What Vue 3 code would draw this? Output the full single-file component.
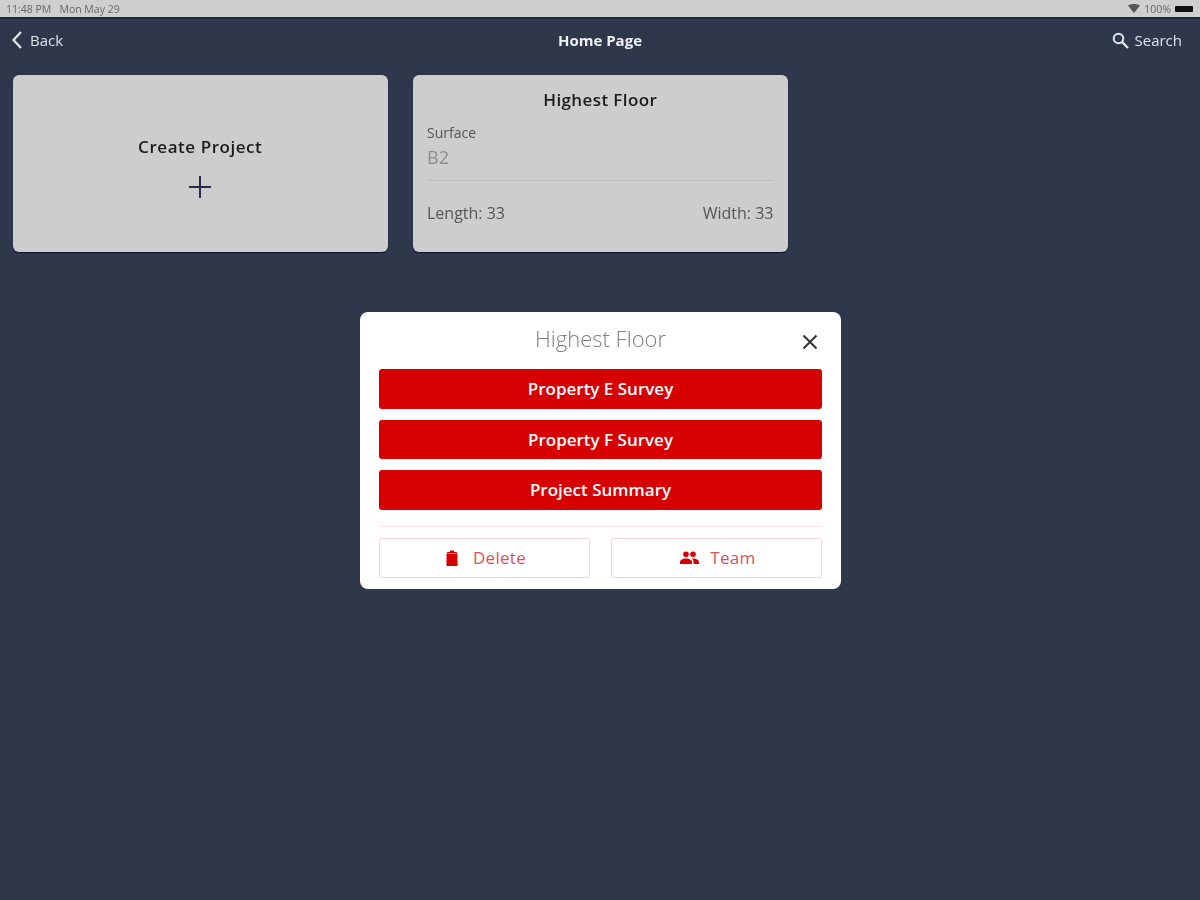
<script setup>
const actions = ['Property E Survey', 'Property F Survey', 'Project Summary']
</script>

<template>
  <div class="page">
    <div class="status">
      <span class="soft">11:48 PM&nbsp;&nbsp; Mon May 29</span>
      <div class="status-right soft">
        <svg width="12" height="9" viewBox="0 0 12 9"><path d="M0 1.500C3.500-.5 8.500-.5 12 1.500L6 9z" fill="#555" /></svg>
        <span>100%</span>
        <span class="battery"></span>
      </div>
    </div>
    <header class="nav">
      <div class="nav-left">
        <svg width="12" height="20" viewBox="0 0 12 20"><path d="M10 2 2.500 10 10 18" fill="none" stroke="#e4e6ea" stroke-width="2.2" /></svg>
        <span>Back</span>
      </div>
      <div class="nav-title">Home Page</div>
      <div class="nav-right">
        <svg width="17" height="17" viewBox="0 0 17 17"><circle cx="6.500" cy="6.500" r="4.800" fill="none" stroke="#e4e6ea" stroke-width="2" /><path d="m10 10 6 6" stroke="#e4e6ea" stroke-width="2.400" /></svg>
        <span>Search</span>
      </div>
    </header>
    <main class="cards">
      <section class="card create">
        <h2>Create Project</h2>
        <svg width="22" height="22" viewBox="0 0 22 22"><path d="M11 0v22M0 11h22" stroke="#232c4a" stroke-width="2" /></svg>
      </section>
      <section class="card project">
        <h2>Highest Floor</h2>
        <div class="label">Surface</div>
        <div class="value">B2</div>
        <div class="rule"></div>
        <div class="dims"><span>Length: 33</span><span>Width: 33</span></div>
      </section>
    </main>
    <div class="modal">
      <div class="modal-head">
        <span>Highest Floor</span>
        <svg class="close" width="16" height="16" viewBox="0 0 16 16"><path d="m1.500 1.500 13 13m0-13-13 13" stroke="#333" stroke-width="2" /></svg>
      </div>
      <div class="actions">
        <button v-for="a in actions" :key="a" class="primary">{{ a }}</button>
      </div>
      <div class="divider"></div>
      <div class="secondary-row">
        <button class="secondary delete">
          <svg width="12" height="16" viewBox="0 0 12 16"><path d="M.5 3.500h11V16H.5zM3.500 2l.8-1.500h3.400L8.500 2h2.500v1h-10V2z" fill="#d60000" /></svg>
          <span>Delete</span>
        </button>
        <button class="secondary team">
          <svg width="19" height="13" viewBox="0 0 19 13"><circle cx="6" cy="3.200" r="2.800" fill="#d60000" /><circle cx="13" cy="3.200" r="2.800" fill="#d60000" /><path d="M0 13v-2c0-2.200 3.200-3.500 6-3.500s6 1.300 6 3.500v2zM13.500 13v-2c0-1.400-.6-2.600-1.700-3.400C14.900 7.200 19 8.500 19 11v2z" fill="#d60000" /></svg>
          <span>Team</span>
        </button>
      </div>
    </div>
  </div>
</template>

<style>
html, body { margin: 0; background: #2f374b; }
</style>

<style scoped>
.page {
  position: relative;
  width: 1200px;
  height: 900px;
  background: #2f374b;
  font-family: "Open Sans", "Noto Sans", sans-serif;
  overflow: hidden;
}
.soft { filter: blur(0.6px); }
.status {
  height: 17px;
  background: #cfcfcf;
  border-bottom: 2px solid #1f2840;
  display: flex;
  justify-content: space-between;
  align-items: center;
  padding: 0 7px 0 6px;
  font-size: 10.5px;
  color: #666;
}
.status-right { display: flex; align-items: center; gap: 4px; }
.battery { width: 18px; height: 6px; background: #111; border-radius: 1px; }
.nav {
  height: 42px;
  display: grid;
  grid-template-columns: 1fr auto 1fr;
  align-items: center;
  padding: 0 11px;
  color: #dfe1e6;
  font-size: 15px;
  filter: blur(0.6px);
}
.nav-left { display: flex; align-items: center; gap: 7px; }
.nav-right { display: flex; align-items: center; gap: 6px; justify-content: flex-end; padding-right: 7px; }
.nav-title { font-size: 15px; font-weight: 700; color: #eef0f3; }
.cards {
  display: flex;
  gap: 25.5px;
  padding: 14px 13px 0;
  filter: blur(0.6px);
}
.card {
  width: 374.5px;
  height: 177px;
  box-sizing: border-box;
  background: #cdcdcd;
  border-radius: 6px;
  box-shadow: 0 1px 1px #0c1433, 0 0 1px #1a2340;
  color: #1c1c1c;
}
.card h2 { margin: 0; font-size: 17px; font-weight: 600; line-height: 24px; letter-spacing: 0.4px; }
.create {
  display: flex;
  flex-direction: column;
  align-items: center;
  justify-content: center;
  gap: 17px;
  padding-top: 5px;
}
.create h2 { letter-spacing: 0.55px; }
.project { padding: 13px 14px 0; }
.project h2 { text-align: center; margin-bottom: 13px; }
.label { font-size: 14px; line-height: 16px; color: #555; }
.value { font-size: 18px; line-height: 24px; color: #8d8d8d; margin-top: 4px; }
.rule { height: 1px; background: #bdbdbd; margin-top: 11px; }
.dims {
  display: flex;
  justify-content: space-between;
  margin-top: 21px;
  font-size: 16px;
  line-height: 22px;
  color: #555;
}
.modal {
  position: absolute;
  left: 360px;
  top: 312px;
  width: 481px;
  height: 277px;
  box-sizing: border-box;
  padding: 0 19px;
  background: #fff;
  border-radius: 8px;
  filter: blur(0.6px);
}
.modal-head {
  position: relative;
  height: 57px;
  display: flex;
  align-items: flex-start;
  justify-content: center;
  padding-top: 11px;
  box-sizing: border-box;
  font-size: 22px;
  font-weight: 300;
  line-height: 31px;
  color: #808080;
}
.close { position: absolute; right: 4px; top: 22px; }
.actions { display: flex; flex-direction: column; gap: 11px; }
.primary {
  height: 39.5px;
  border: 0;
  border-radius: 3px;
  background: #d60000;
  color: #fff;
  font: 600 17px "Open Sans", sans-serif;
}
.divider { height: 1px; background: #fbe4e4; margin-top: 16.5px; }
.secondary-row { display: flex; gap: 21px; margin-top: 11px; }
.secondary {
  flex: 1;
  height: 40px;
  padding: 0 0 1px 3px;
  border: 1px solid #f6d2d2;
  border-radius: 3px;
  background: #fff;
  color: #d9525a;
  font: 400 17px "Open Sans", sans-serif;
  letter-spacing: 0.3px;
  display: flex;
  align-items: center;
  justify-content: center;
}
.delete { gap: 15px; }
.team { gap: 11px; }
</style>
